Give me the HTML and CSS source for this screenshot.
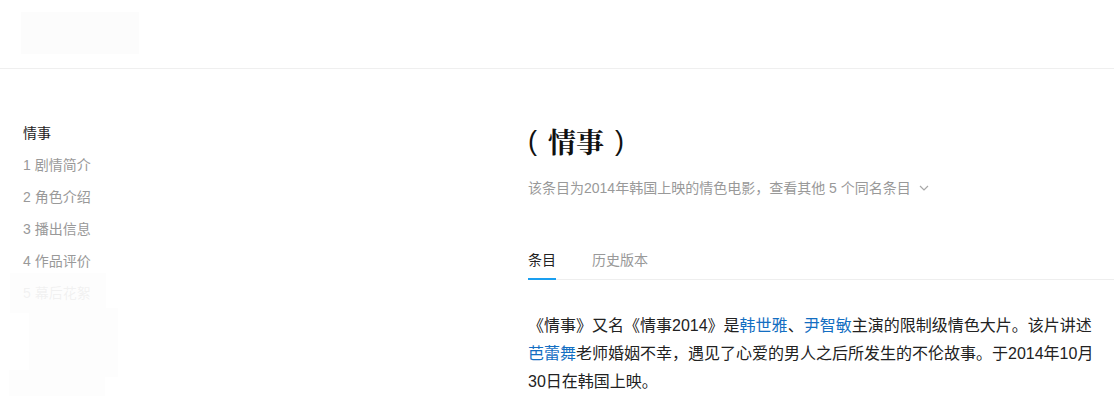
FILE: index.html
```html
<!DOCTYPE html>
<html lang="zh-CN">
<head>
<meta charset="utf-8">
<title>情事</title>
<link rel="stylesheet" href="styles.css">
</head>
<body>
<header class="header">
  <div class="logo-skeleton"></div>
</header>
<div class="page">
  <aside class="catalog">
    <div class="catalog-title">情事</div>
    <ul class="catalog-list">
      <li>1 剧情简介</li>
      <li>2 角色介绍</li>
      <li>3 播出信息</li>
      <li>4 作品评价</li>
      <li>5 幕后花絮</li>
    </ul>
    <div class="fade fade-a"></div>
    <div class="fade fade-b"></div>
    <div class="fade fade-c"></div>
  </aside>
  <main class="content">
    <h1 class="title"><span class="paren">(</span><span class="title-text">情事</span><span class="paren">)</span></h1>
    <div class="polysemy"><span>该条目为2014年韩国上映的情色电影，查看其他 5 个同名条目</span><svg class="chevron" width="10" height="6" viewBox="0 0 10 6"><path d="M1 1 L5 5 L9 1" fill="none" stroke="#a8a8a8" stroke-width="1.2"/></svg></div>
    <nav class="tabs">
      <span class="tab active">条目</span>
      <span class="tab">历史版本</span>
    </nav>
    <p class="summary">《情事》又名《情事2014》是<a href="#">韩世雅</a>、<a href="#">尹智敏</a>主演的限制级情色大片。该片讲述<a href="#">芭蕾舞</a>老师婚姻不幸，遇见了心爱的男人之后所发生的不伦故事。于2014年10月30日在韩国上映。</p>
  </main>
</div>
</body>
</html>
```
FILE: styles.css
```css
* { box-sizing: border-box; }
html, body { margin: 0; padding: 0; background: #fff; }
body {
  font-family: "Liberation Sans", "Noto Sans CJK SC", sans-serif;
  color: #333;
  overflow: hidden;
}
.header {
  height: 69px;
  border-bottom: 1px solid #efefef;
  padding: 12px 0 0 21px;
}
.logo-skeleton {
  width: 118px;
  height: 42px;
  background: #fcfcfc;
}
.page {
  display: flex;
  padding-top: 48px;
}
.catalog {
  position: relative;
  width: 528px;
  flex: none;
  padding-left: 23px;
  font-size: 14px;
  line-height: 32px;
}
.catalog-title { color: #222; }
.catalog-list { list-style: none; margin: 0; padding: 0; color: #999; }
.fade { position: absolute; background: rgba(253,253,253,0.88); }
.fade-a { left: 10px; top: 156px; width: 96px; height: 40px; }
.fade-b { left: 29px; top: 191px; width: 89px; height: 69px; }
.fade-c { left: 9px; top: 253px; width: 96px; height: 50px; }
.content { flex: 1; min-width: 0; }
.title {
  margin: 0;
  height: 48px;
  display: flex;
  align-items: center;
  gap: 11px;
  font-size: 28px;
  line-height: 48px;
  color: #111;
}
.paren {
  font-family: "Liberation Sans", sans-serif;
  font-weight: normal;
  font-size: 27px;
}
.title-text {
  font-family: "Noto Serif CJK SC", "Noto Sans CJK SC", serif;
  font-weight: 700;
}
.polysemy {
  margin-top: 13px;
  font-size: 14px;
  line-height: 20px;
  color: #999;
  display: flex;
  align-items: center;
}
.chevron { margin-left: 8px; }
.tabs {
  margin-top: 52px;
  display: flex;
  gap: 36px;
  border-bottom: 1px solid #eeeeee;
  font-size: 14px;
  line-height: 20px;
}
.tab {
  color: #999;
  padding-bottom: 8px;
  margin-bottom: -1px;
  border-bottom: 2px solid transparent;
}
.tab.active {
  color: #222;
  border-bottom-color: #1a9ff0;
}
.summary {
  margin: 32px 0 0;
  width: 572px;
  font-size: 16px;
  line-height: 28px;
  color: #222;
}
.summary a { color: #136ec2; text-decoration: none; }
```
